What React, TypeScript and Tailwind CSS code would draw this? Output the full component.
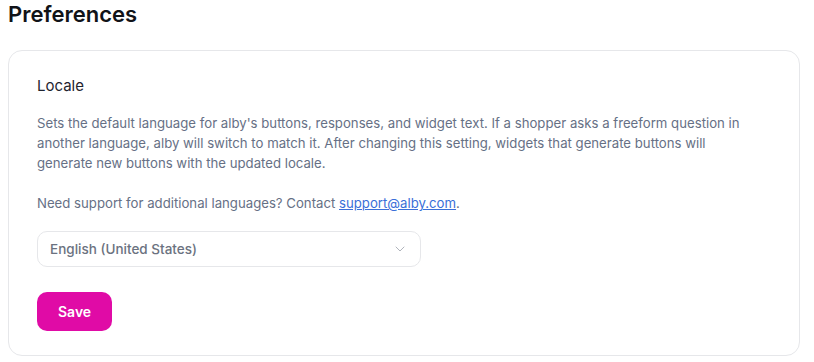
import { ChevronDown } from "lucide-react";

function LocaleCard() {
  return (
    <div className="ml-2 mr-[14px] mt-[22px] rounded-[14px] border border-[#e6e7ea] bg-white px-7 pt-6 pb-6">
      <h2 className="text-[15px] leading-[22px] text-[#1f2430]">Locale</h2>
      <div className="mt-4 text-[13.2px] leading-5 text-[#667085]">
        <p>
          Sets the default language for alby's buttons, responses, and widget text. If a shopper asks a freeform
          question in
          <br />
          another language, alby will switch to match it. After changing this setting, widgets that generate buttons
          will
          <br />
          generate new buttons with the updated locale.
        </p>
        <p className="mt-5">
          Need support for additional languages? Contact{" "}
          <a href="#" className="text-[#3a6fd8] underline">
            support@alby.com
          </a>
          .
        </p>
      </div>
      <button className="mt-[18px] flex h-9 w-[384px] items-center justify-between rounded-[10px] border border-[#e6e7ea] bg-white pl-3 pr-3 text-left">
        <span className="text-[13.5px] font-medium text-[#6b7280]">English (United States)</span>
        <ChevronDown className="h-4 w-4 text-[#b0b4bc]" strokeWidth={1.5} />
      </button>
      <button className="mt-[25px] h-[39px] rounded-[10px] bg-[#e00ba6] px-[21px] text-[14px] font-semibold text-white">
        Save
      </button>
    </div>
  );
}

export default function App() {
  return (
    <div className="min-h-screen bg-white font-['Inter',sans-serif]">
      <h1 className="pl-2 pt-0 text-[22px] leading-[28px] font-semibold text-[#111318]">Preferences</h1>
      <LocaleCard />
    </div>
  );
}
